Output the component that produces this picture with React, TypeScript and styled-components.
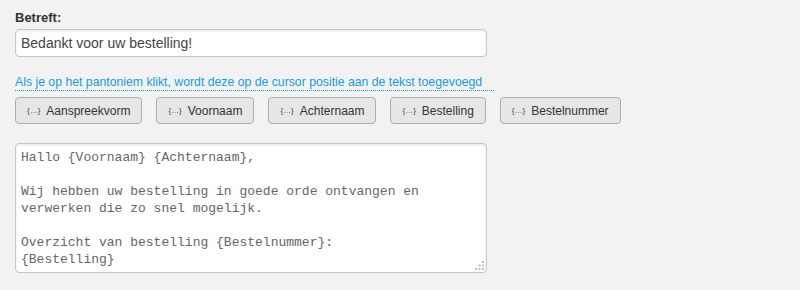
import React from 'react'
import styled, { createGlobalStyle } from 'styled-components'

const GlobalStyle = createGlobalStyle`
  body {
    margin: 0;
    background: #f2f2f2;
    font-family: 'Liberation Sans', Arial, sans-serif;
  }
`

const placeholders = ['Aanspreekvorm', 'Voornaam', 'Achternaam', 'Bestelling', 'Bestelnummer']

const body = `Hallo {Voornaam} {Achternaam},

Wij hebben uw bestelling in goede orde ontvangen en
verwerken die zo snel mogelijk.

Overzicht van bestelling {Bestelnummer}:
{Bestelling}`

const Grip = () => (
  <GripIcon width="9" height="9" viewBox="0 0 9 9">
    <rect x="7" y="0" width="2" height="2" />
    <rect x="3.5" y="3.5" width="2" height="2" />
    <rect x="7" y="3.5" width="2" height="2" />
    <rect x="0" y="7" width="2" height="2" />
    <rect x="3.5" y="7" width="2" height="2" />
    <rect x="7" y="7" width="2" height="2" />
  </GripIcon>
)

const App = () => {
  return (
    <Page>
      <GlobalStyle />
      <Label>Betreft:</Label>
      <SubjectInput defaultValue="Bedankt voor uw bestelling!" />

      <Hint>Als je op het pantoniem klikt, wordt deze op de cursor positie aan de tekst toegevoegd</Hint>

      <ButtonRow>
        {placeholders.map(name => (
          <TagButton key={name}>
            <Braces>{'{…}'}</Braces>
            {name}
          </TagButton>
        ))}
      </ButtonRow>

      <EditorWrap>
        <Editor defaultValue={body} spellCheck={false} />
        <Grip />
      </EditorWrap>
    </Page>
  )
}

const Page = styled.div`
  display: flex;
  flex-direction: column;
  align-items: flex-start;

  padding: 10px 15px;
`

const Label = styled.label`
  margin-bottom: 3px;

  font-size: 13px;
  font-weight: bold;
  line-height: 16px;
  color: #333;
`

const SubjectInput = styled.input`
  box-sizing: border-box;
  width: 472px;
  height: 28px;

  padding: 0 5px;

  border: 1px solid #c6c6c6;
  border-radius: 4px;
  box-shadow: inset 0 1px 3px rgba(0, 0, 0, 0.1);

  font-family: 'Liberation Sans', Arial, sans-serif;
  font-size: 14px;
  color: #444;

  background: #fff;
  outline: none;
`

const Hint = styled.span`
  display: inline-block;

  margin-top: 18px;
  padding-right: 12px;

  border-bottom: 1px dotted #1a9bd8;

  font-size: 12.25px;
  line-height: 15px;
  color: #1a9bd8;
`

const ButtonRow = styled.div`
  display: flex;
  gap: 14px;

  margin-top: 6px;
`

const TagButton = styled.button`
  display: flex;
  align-items: center;
  gap: 6px;

  height: 27px;
  padding: 0 11px;

  border: 1px solid #adadad;
  border-radius: 4px;

  font-family: 'Liberation Sans', Arial, sans-serif;
  font-size: 12px;
  color: #333;

  background: #e6e6e6;
  cursor: pointer;
`

const Braces = styled.span`
  font-size: 8px;
  color: #444;
`

const EditorWrap = styled.div`
  position: relative;

  margin-top: 19px;
`

const Editor = styled.textarea`
  display: block;
  box-sizing: border-box;
  width: 472px;
  height: 130px;

  padding: 5px 5px;

  border: 1px solid #c6c6c6;
  border-radius: 4px;
  box-shadow: inset 0 1px 3px rgba(0, 0, 0, 0.1);

  font-family: 'Liberation Mono', 'Courier New', monospace;
  font-size: 13px;
  line-height: 17px;
  color: #666;

  background: #fff;
  resize: none;
  outline: none;
`

const GripIcon = styled.svg`
  position: absolute;
  right: 3px;
  bottom: 3px;

  fill: #bdbdbd;
`

export default App
